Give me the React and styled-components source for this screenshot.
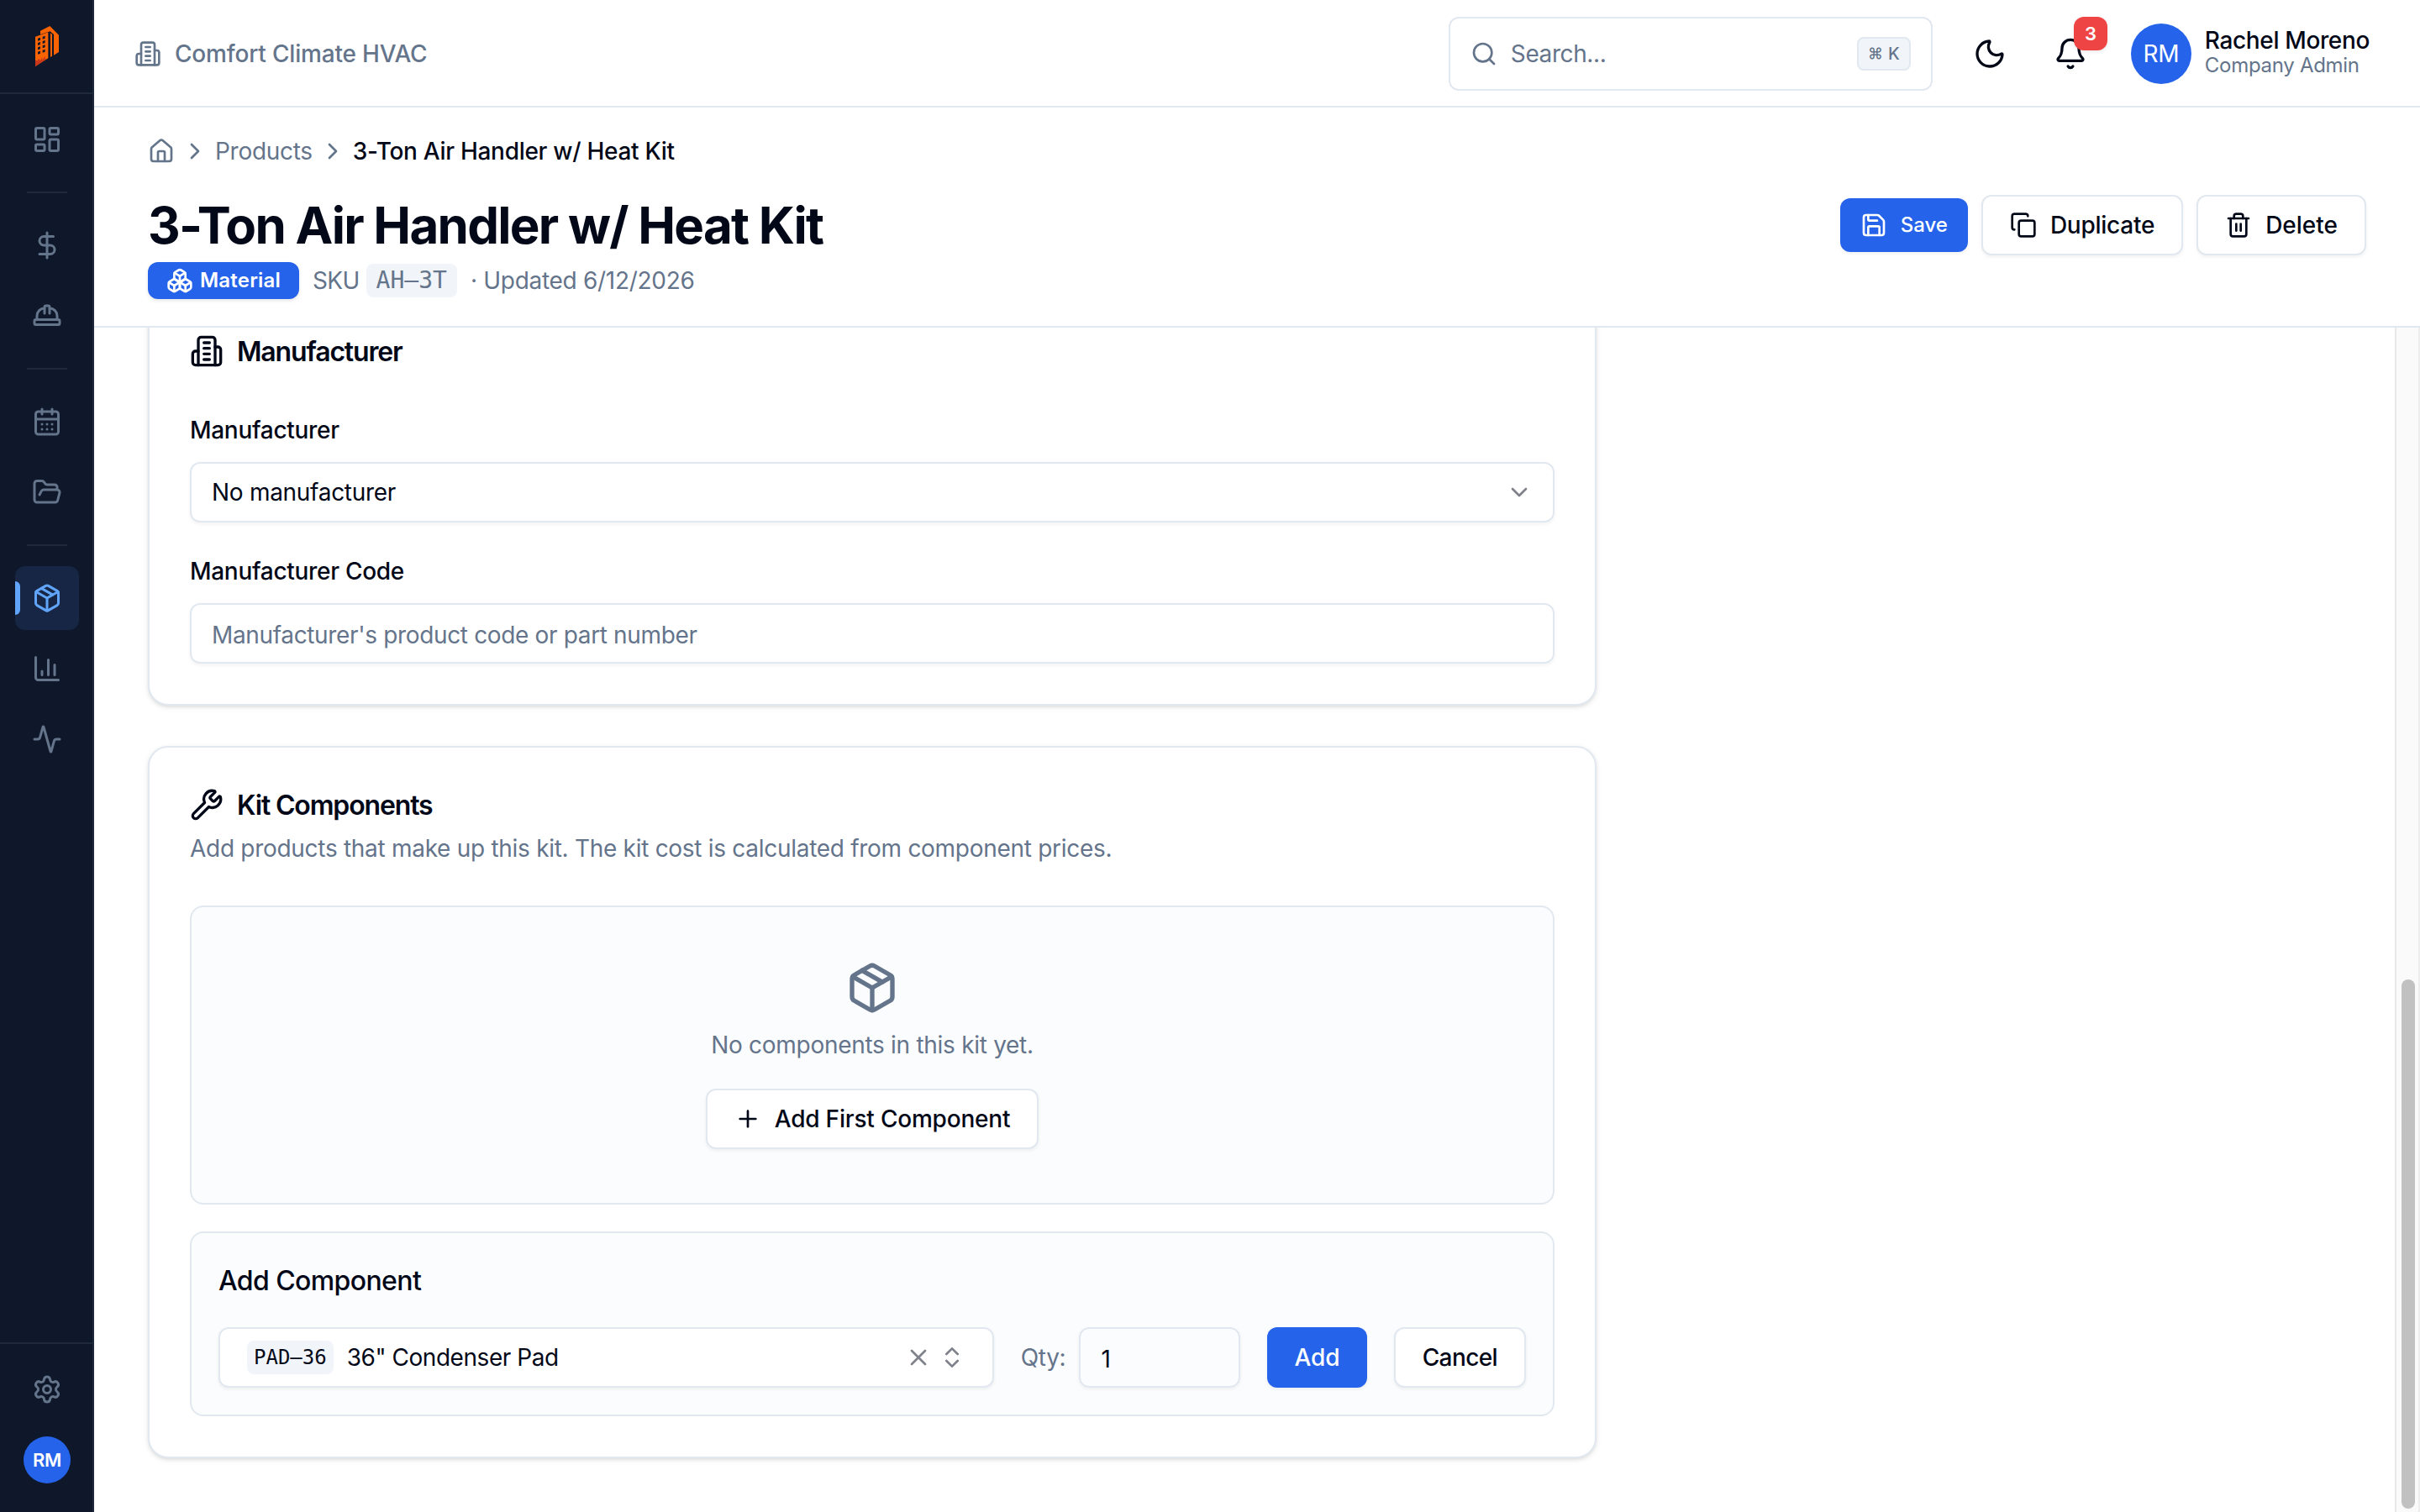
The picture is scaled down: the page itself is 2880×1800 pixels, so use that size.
import React from "react";
import styled, { createGlobalStyle, css } from "styled-components";
import {
    Activity,
    Bell,
    Boxes,
    CalendarDays,
    ChevronDown,
    ChevronRight,
    ChevronsUpDown,
    Copy,
    DollarSign,
    FolderOpen,
    HardHat,
    House,
    LayoutDashboard,
    Moon,
    Package,
    Plus,
    Save,
    Search,
    Trash2,
    Wrench,
    X,
} from "lucide-react";

const colors = {
    text: "#020817",
    muted: "#64748b",
    border: "#e2e8f0",
    soft: "#f1f5f9",
    panel: "#fbfcfe",
    primary: "#2563eb",
    sidebar: "#0f172a",
    sidebarLine: "#1e293b",
    danger: "#ef4444",
};

const GlobalStyle = createGlobalStyle`
    * {
        box-sizing: border-box;
    }
    body {
        margin: 0;
        background: #ffffff;
        color: ${colors.text};
        font-family: Inter, "Liberation Sans", sans-serif;
        font-size: 28px;
        line-height: 40px;
        letter-spacing: -0.29px;
        -webkit-font-smoothing: antialiased;
    }
    svg {
        display: block;
        flex-shrink: 0;
    }
    button, input {
        font: inherit;
        color: inherit;
        letter-spacing: inherit;
    }
`

const Page = styled.div`
    display: flex;
    width: 2880px;
    height: 1800px;
    overflow: hidden;
`

/* sidebar */

const Sidebar = styled.aside`
    display: flex;
    flex-direction: column;
    width: 112px;
    flex-shrink: 0;
    background: ${colors.sidebar};
    border-right: 2px solid ${colors.sidebarLine};
`

const LogoBox = styled.div`
    display: flex;
    align-items: center;
    justify-content: center;
    height: 112px;
    padding-left: 2px;
    border-bottom: 2px solid ${colors.sidebarLine};
`

const Nav = styled.nav`
    display: flex;
    flex: 1;
    flex-direction: column;
    align-items: center;
    gap: 8px;
    padding: 16px 0 0 2px;
`

const NavItem = styled.a`
    position: relative;
    display: flex;
    align-items: center;
    justify-content: center;
    width: 76px;
    height: 76px;
    border-radius: 12px;
    overflow: hidden;
    color: ${colors.muted};

    ${(props) => props.$active && css`
        color: #60a5fa;
        background: #172645;

        &::before {
            content: "";
            position: absolute;
            left: 0;
            top: 18px;
            width: 6px;
            height: 40px;
            border-radius: 0 6px 6px 0;
            background: #60a5fa;
        }
    `}
`

const NavLine = styled.div`
    width: 48px;
    height: 2px;
    margin: 16px 0;
    background: ${colors.sidebarLine};
`

const SidebarFooter = styled.div`
    display: flex;
    flex-direction: column;
    align-items: center;
    gap: 8px;
    padding: 16px 0 24px 2px;
    border-top: 2px solid ${colors.sidebarLine};
`

const Avatar = styled.div`
    display: flex;
    align-items: center;
    justify-content: center;
    flex-shrink: 0;
    width: ${(props) => props.$size}px;
    height: ${(props) => props.$size}px;
    border-radius: 50%;
    background: ${colors.primary};
    color: #ffffff;
    font-size: ${(props) => props.$font}px;
    font-weight: ${(props) => props.$weight};
`

/* top bar */

const Main = styled.main`
    display: flex;
    flex: 1;
    flex-direction: column;
    min-width: 0;
`

const TopBar = styled.header`
    display: flex;
    align-items: center;
    justify-content: space-between;
    height: 128px;
    flex-shrink: 0;
    padding: 0 60px 0 48px;
    border-bottom: 2px solid ${colors.border};
`

const Company = styled.div`
    display: flex;
    align-items: center;
    gap: 16px;
    padding-top: 2px;
    color: ${colors.muted};
    font-weight: 500;
    letter-spacing: -0.18px;
`

const TopActions = styled.div`
    display: flex;
    align-items: center;
    padding-top: 2px;
`

const SearchBox = styled.div`
    display: flex;
    align-items: center;
    gap: 16px;
    width: 576px;
    height: 88px;
    padding: 0 24px;
    border: 2px solid ${colors.border};
    border-radius: 12px;
    color: ${colors.muted};
`

const SearchText = styled.span`
    flex: 1;
    letter-spacing: -0.4px;
`

const Kbd = styled.kbd`
    display: flex;
    align-items: center;
    justify-content: center;
    gap: 8px;
    width: 64px;
    height: 40px;
    border: 2px solid ${colors.border};
    border-radius: 8px;
    background: ${colors.soft};
    font-family: Inter, "DejaVu Sans Mono", monospace;
    font-size: 20px;
    font-weight: 500;
    line-height: 28px;
    letter-spacing: 0;
`

const KbdSymbol = styled.span`
    width: 16px;
    font-size: 18px;
    text-align: center;
`

const IconButton = styled.div`
    position: relative;
    display: flex;
    align-items: center;
    justify-content: center;
    width: 72px;
    height: 72px;
    margin-left: ${(props) => props.$gap}px;
`

const Count = styled.span`
    position: absolute;
    top: -8px;
    right: -8px;
    display: flex;
    align-items: center;
    justify-content: center;
    width: 40px;
    height: 40px;
    border-radius: 12px;
    background: ${colors.danger};
    box-shadow: 0 2px 4px rgba(0, 0, 0, 0.08);
    color: #ffffff;
    font-size: 22px;
    font-weight: 600;
`

const User = styled.div`
    display: flex;
    align-items: center;
    gap: 16px;
    margin-left: 36px;
`

const UserName = styled.div`
    font-weight: 500;
    line-height: 28px;
    letter-spacing: -0.36px;
`

const UserRole = styled.div`
    color: ${colors.muted};
    font-size: 24px;
    line-height: 32px;
`

/* page heading */

const Heading = styled.section`
    display: flex;
    flex-direction: column;
    height: 262px;
    flex-shrink: 0;
    padding: 32px 64px 0;
    border-bottom: 2px solid ${colors.border};
`

const Breadcrumb = styled.div`
    display: flex;
    align-items: center;
    gap: 8px;
    height: 40px;
    margin-bottom: 32px;
    color: ${colors.muted};
`

const Crumb = styled.span`
    color: ${(props) => (props.$current ? colors.text : colors.muted)};
    font-weight: ${(props) => (props.$current ? 500 : 400)};
`

const TitleRow = styled.div`
    display: flex;
    align-items: center;
    justify-content: space-between;
    height: 72px;
`

const Title = styled.h1`
    margin: 0;
    font-size: 60px;
    font-weight: 700;
    line-height: 72px;
    letter-spacing: -0.029em;
`

const ButtonRow = styled.div`
    display: flex;
    align-items: center;
    gap: 16px;
`

const Button = styled.button`
    display: inline-flex;
    align-items: center;
    justify-content: center;
    gap: 16px;
    flex-shrink: 0;
    height: ${(props) => (props.$small ? 64 : 72)}px;
    padding: 0 ${(props) => (props.$small ? 24 : 32)}px;
    border: ${(props) => (props.$primary ? "none" : `2px solid ${colors.border}`)};
    border-radius: 12px;
    background: ${(props) => (props.$primary ? colors.primary : "#ffffff")};
    box-shadow: 0 2px 4px rgba(0, 0, 0, 0.06);
    color: ${(props) => (props.$primary ? "#ffffff" : colors.text)};
    font-size: ${(props) => (props.$small ? 24 : 28)}px;
    font-weight: 500;
    letter-spacing: ${(props) => props.$tracking || 0}px;
    white-space: nowrap;
`

const Meta = styled.div`
    display: flex;
    align-items: center;
    margin-top: 8px;
    height: 44px;
    color: ${colors.muted};
`

const TypeBadge = styled.span`
    display: flex;
    align-items: center;
    gap: 8px;
    height: 44px;
    padding: 0 22px;
    margin-right: 16px;
    border-radius: 12px;
    background: ${colors.primary};
    box-shadow: 0 2px 4px rgba(0, 0, 0, 0.1);
    color: #ffffff;
    font-size: 24px;
    font-weight: 600;
    letter-spacing: 0.2px;
`

const Code = styled.code`
    height: 40px;
    padding: 0 ${(props) => props.$pad}px;
    border-radius: 8px;
    background: ${colors.soft};
    font-family: "DejaVu Sans Mono", monospace;
    font-size: ${(props) => props.$font}px;
    line-height: 40px;
    letter-spacing: 0;
    white-space: nowrap;
`

const Sku = styled.span`
    display: flex;
    align-items: center;
    gap: 8px;
    margin-right: 16px;
    letter-spacing: -0.7px;
`

/* scrolled form */

const Body = styled.div`
    display: flex;
    flex: 1;
    min-height: 0;
`

const Content = styled.div`
    display: flex;
    flex: 1;
    flex-direction: column;
    justify-content: flex-end;
    gap: 48px;
    padding: 0 64px 64px;
    overflow: hidden;
`

const ScrollTrack = styled.div`
    display: flex;
    align-items: flex-end;
    justify-content: center;
    width: 30px;
    padding: 0 0 4px 2px;
    background: #fafafa;
    border-left: 2px solid #e8e8e8;
    border-right: 2px solid #ededed;
`

const ScrollThumb = styled.div`
    width: 16px;
    height: 630px;
    border-radius: 8px;
    background: #c1c1c1;
`

const Card = styled.section`
    flex-shrink: 0;
    width: 1724px;
    padding: 48px;
    border: 2px solid ${colors.border};
    border-radius: 24px;
    background: #ffffff;
    box-shadow: 0 2px 6px rgba(0, 0, 0, 0.1), 0 2px 4px -2px rgba(0, 0, 0, 0.1);
`

const CardTitle = styled.h2`
    display: flex;
    align-items: center;
    gap: 16px;
    height: 40px;
    margin: 0;
    font-size: 32px;
    font-weight: 600;
    line-height: 40px;
    letter-spacing: -0.036em;

    span {
        padding-top: 2px;
    }
`

const CardText = styled.p`
    margin: 12px 0 0;
    color: ${colors.muted};
`

const Fields = styled.div`
    display: flex;
    flex-direction: column;
    gap: 32px;
    margin-top: 48px;
`

const Label = styled.label`
    display: block;
    margin-bottom: 12px;
    font-weight: 500;
    line-height: 52px;
`

const Select = styled.div`
    display: flex;
    align-items: center;
    justify-content: space-between;
    height: 72px;
    padding: 0 24px;
    border: 2px solid ${colors.border};
    border-radius: 12px;
    box-shadow: 0 2px 4px rgba(0, 0, 0, 0.05);
`

const Input = styled.input`
    display: block;
    width: ${(props) => props.$width || "100%"};
    height: 72px;
    padding: 4px 24px 0;
    border: 2px solid ${colors.border};
    border-radius: 12px;
    outline: none;
    background: transparent;
    box-shadow: 0 2px 4px rgba(0, 0, 0, 0.05);

    &::placeholder {
        color: ${colors.muted};
        letter-spacing: -0.35px;
        opacity: 1;
    }
`

const Faded = styled.span`
    display: flex;
    gap: 8px;
    opacity: 0.5;
`

const EmptyState = styled.div`
    display: flex;
    flex-direction: column;
    align-items: center;
    margin-top: 48px;
    padding: 64px;
    border: 2px solid ${colors.border};
    border-radius: 16px;
    background: ${colors.panel};
    color: ${colors.muted};
`

const EmptyText = styled.p`
    margin: 16px 0 32px;
`

const AddPanel = styled.div`
    margin-top: 32px;
    padding: 32px;
    border: 2px solid ${colors.border};
    border-radius: 16px;
    background: ${colors.panel};
`

const AddTitle = styled.h3`
    margin: 0 0 31px;
    padding-top: 1px;
    font-size: 32px;
    font-weight: 500;
    line-height: 48px;
    letter-spacing: -0.6px;
`

const AddRow = styled.div`
    display: flex;
    align-items: center;
    gap: 32px;
`

const Combo = styled.div`
    display: flex;
    flex: 1;
    align-items: center;
    height: 72px;
    padding: 0 32px;
    border: 2px solid ${colors.border};
    border-radius: 12px;
    background: #ffffff;
    box-shadow: 0 2px 4px rgba(0, 0, 0, 0.06);
`

const ComboText = styled.span`
    flex: 1;
    margin-left: 16px;
    letter-spacing: -0.45px;
`

const Qty = styled.label`
    display: flex;
    align-items: center;
    gap: 16px;
    color: ${colors.muted};

    input {
        color: ${colors.text};
    }
`

const BuildingIcon = ({ size }) => (
    <svg width={size} height={size} viewBox="0 0 24 24" fill="none" stroke="currentColor" strokeWidth="2" strokeLinecap="round" strokeLinejoin="round">
        <path d="M6 22V4a2 2 0 0 1 2-2h8a2 2 0 0 1 2 2v18Z" />
        <path d="M6 12H4a2 2 0 0 0-2 2v6a2 2 0 0 0 2 2h2" />
        <path d="M18 9h2a2 2 0 0 1 2 2v9a2 2 0 0 1-2 2h-2" />
        <path d="M10 6h4M10 10h4M10 14h4M10 18h4" />
    </svg>
)

// bar chart with an L-shaped axis and three columns
const ChartIcon = ({ size }) => (
    <svg width={size} height={size} viewBox="0 0 24 24" fill="none" stroke="currentColor" strokeWidth="2" strokeLinecap="round" strokeLinejoin="round">
        <path d="M3 3v16a2 2 0 0 0 2 2h16" />
        <path d="M8 17v-3M13 17V5M18 17V9" />
    </svg>
)

// six-lobed settings gear
const GearIcon = ({ size }) => (
    <svg width={size} height={size} viewBox="0 0 24 24" fill="none" stroke="currentColor" strokeWidth="2" strokeLinecap="round" strokeLinejoin="round">
        <path d="M9.671 4.136a2.34 2.34 0 0 1 4.659 0 2.34 2.34 0 0 0 3.319 1.915 2.34 2.34 0 0 1 2.33 4.033 2.34 2.34 0 0 0 0 3.831 2.34 2.34 0 0 1-2.33 4.033 2.34 2.34 0 0 0-3.319 1.915 2.34 2.34 0 0 1-4.659 0 2.34 2.34 0 0 0-3.32-1.915 2.34 2.34 0 0 1-2.33-4.033 2.34 2.34 0 0 0 0-3.831A2.34 2.34 0 0 1 6.35 6.051a2.34 2.34 0 0 0 3.319-1.915" />
        <circle cx="12" cy="12" r="3" />
    </svg>
)

const Logo = () => (
    <svg width="28" height="48" viewBox="0 0 84 144">
        <path fill="#f96302" d="M18 17 52 0 84 32V93L66 104V30L53 19 18 30Z" />
        <path fill="#f96302" d="M54 25 60 30V107L54 111Z" />
        <path fill="#f96302" d="M0 38 46 22V115L0 144Z" />
        <path fill="#c8371b" d="M0 122 8 124 12 116 18 124 24 112 26 122 34 108 36 118 40 118 0 144Z" />
        <path fill="#0f172a" d="M9 44 18 41V50L9 53ZM26 38 35 35V44L26 47ZM9 60 18 57V66L9 69ZM26 54 35 51V60L26 63ZM9 76 18 73V82L9 85ZM26 70 35 67V76L26 79ZM9 92 18 89V98L9 101ZM26 86 35 83V92L26 95Z" />
    </svg>
)

const navGroups = [
    [LayoutDashboard],
    [DollarSign, HardHat],
    [CalendarDays, FolderOpen],
    [Package, ChartIcon, Activity],
]

const App = () => {
    return (
        <>
            <GlobalStyle />
            <Page>
                <Sidebar>
                    <LogoBox><Logo /></LogoBox>
                    <Nav>
                        {navGroups.map((group, i) => (
                            <React.Fragment key={i}>
                                {i > 0 && <NavLine />}
                                {group.map((Icon, j) => (
                                    <NavItem key={j} $active={Icon === Package}>
                                        <Icon size={36} />
                                    </NavItem>
                                ))}
                            </React.Fragment>
                        ))}
                    </Nav>
                    <SidebarFooter>
                        <NavItem><GearIcon size={36} /></NavItem>
                        <NavItem><Avatar $size={56} $font={22} $weight={600}>RM</Avatar></NavItem>
                    </SidebarFooter>
                </Sidebar>
                <Main>
                    <TopBar>
                        <Company><BuildingIcon size={32} />Comfort Climate HVAC</Company>
                        <TopActions>
                            <SearchBox>
                                <Search size={32} />
                                <SearchText>Search...</SearchText>
                                <Kbd><KbdSymbol>⌘</KbdSymbol><span>K</span></Kbd>
                            </SearchBox>
                            <IconButton $gap={32}><Moon size={40} /></IconButton>
                            <IconButton $gap={24}>
                                <Bell size={40} />
                                <Count>3</Count>
                            </IconButton>
                            <User>
                                <Avatar $size={72} $font={28} $weight={400}>RM</Avatar>
                                <div>
                                    <UserName>Rachel Moreno</UserName>
                                    <UserRole>Company Admin</UserRole>
                                </div>
                            </User>
                        </TopActions>
                    </TopBar>
                    <Heading>
                        <Breadcrumb>
                            <House size={32} />
                            <ChevronRight size={32} />
                            <Crumb>Products</Crumb>
                            <ChevronRight size={32} />
                            <Crumb $current>3-Ton Air Handler w/ Heat Kit</Crumb>
                        </Breadcrumb>
                        <TitleRow>
                            <Title>3-Ton Air Handler w/ Heat Kit</Title>
                            <ButtonRow>
                                <Button $primary $small><Save size={32} />Save</Button>
                                <Button $tracking={-0.25}><Copy size={32} />Duplicate</Button>
                                <Button><Trash2 size={32} />Delete</Button>
                            </ButtonRow>
                        </TitleRow>
                        <Meta>
                            <TypeBadge><Boxes size={32} />Material</TypeBadge>
                            <Sku>SKU <Code $pad={12} $font={28}>AH–3T</Code></Sku>
                            <span>· Updated 6/12/2026</span>
                        </Meta>
                    </Heading>
                    <Body>
                        <Content>
                            <Card>
                                <CardTitle><BuildingIcon size={40} /><span>Manufacturer</span></CardTitle>
                                <Fields>
                                    <div>
                                        <Label>Manufacturer</Label>
                                        <Select>
                                            No manufacturer
                                            <Faded><ChevronDown size={32} /></Faded>
                                        </Select>
                                    </div>
                                    <div>
                                        <Label>Manufacturer Code</Label>
                                        <Input placeholder="Manufacturer's product code or part number" />
                                    </div>
                                </Fields>
                            </Card>
                            <Card>
                                <CardTitle><Wrench size={40} /><span>Kit Components</span></CardTitle>
                                <CardText>Add products that make up this kit. The kit cost is calculated from component prices.</CardText>
                                <EmptyState>
                                    <Package size={64} />
                                    <EmptyText>No components in this kit yet.</EmptyText>
                                    <Button $tracking={-0.2}><Plus size={32} />Add First Component</Button>
                                </EmptyState>
                                <AddPanel>
                                    <AddTitle>Add Component</AddTitle>
                                    <AddRow>
                                        <Combo>
                                            <Code $pad={8} $font={24}>PAD–36</Code>
                                            <ComboText>36" Condenser Pad</ComboText>
                                            <Faded>
                                                <X size={32} />
                                                <ChevronsUpDown size={32} />
                                            </Faded>
                                        </Combo>
                                        <Qty>Qty:<Input $width="192px" defaultValue="1" /></Qty>
                                        <Button $primary>Add</Button>
                                        <Button $tracking={-0.6}>Cancel</Button>
                                    </AddRow>
                                </AddPanel>
                            </Card>
                        </Content>
                        <ScrollTrack><ScrollThumb /></ScrollTrack>
                    </Body>
                </Main>
            </Page>
        </>
    )
}

export default App;
